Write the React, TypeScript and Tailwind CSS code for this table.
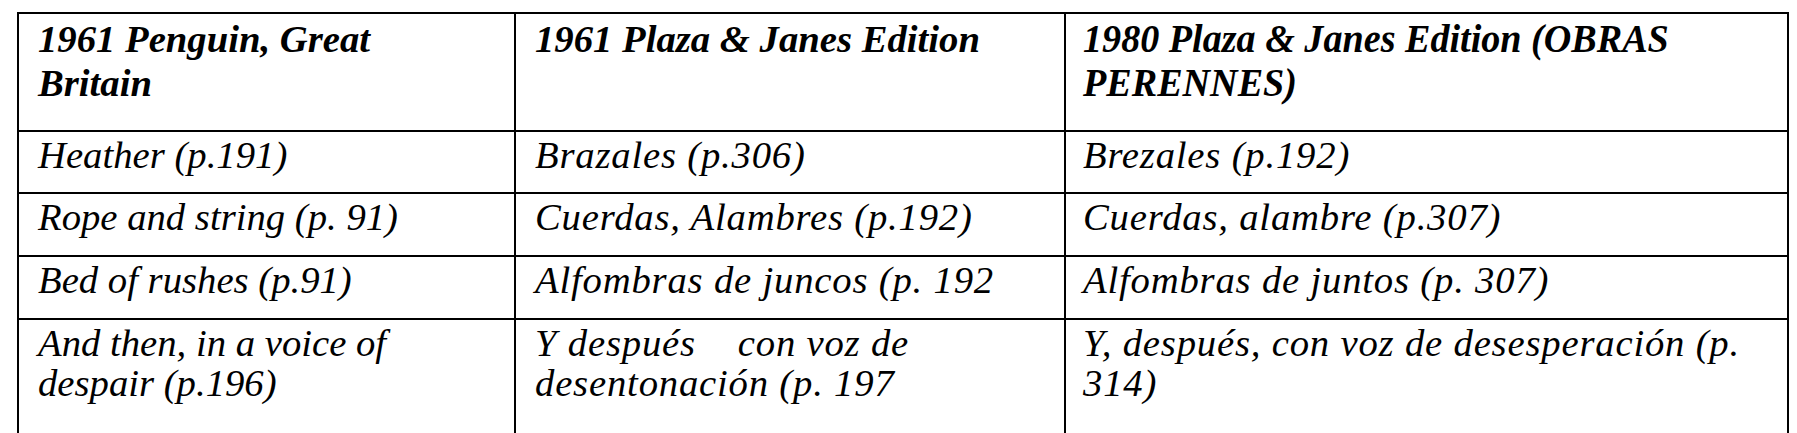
import type { FC, ReactNode } from 'react';

type Row = {
  cells: ReactNode[];
  height: string;
};

const serif = "font-['Liberation_Serif','Times_New_Roman',serif]";

const rows: Row[] = [
  {
    cells: ['Heather (p.191)', 'Brazales (p.306)', 'Brezales (p.192)'],
    height: 'h-[62px]',
  },
  {
    cells: [
      'Rope and string (p. 91)',
      'Cuerdas, Alambres (p.192)',
      'Cuerdas, alambre (p.307)',
    ],
    height: 'h-[63px]',
  },
  {
    cells: [
      'Bed of rushes (p.91)',
      'Alfombras de juncos (p. 192',
      'Alfombras de juntos (p. 307)',
    ],
    height: 'h-[63px]',
  },
  {
    cells: [
      <>
        And then, in a voice of
        <br />
        despair (p.196)
      </>,
      <>
        Y después{'\u00a0\u00a0\u00a0'} con voz de
        <br />
        desentonación (p. 197
      </>,
      <>
        Y, después, con voz de desesperación (p.
        <br />
        314)
      </>,
    ],
    height: 'h-[120px]',
  },
];

const colWidths = ['w-[497px]', 'w-[550px]', 'flex-1'];

const ComparisonTable: FC = () => {
  return (
    <div className={`w-[1772px] border-2 border-black ${serif} text-black`}>
      {/* header */}
      <div className="flex h-[118px] border-b-2 border-black">
        <div className={`${colWidths[0]} border-r-2 border-black pl-[19px] pt-[3px]`}>
          <p className="text-[38.7px] leading-[44px] font-bold italic">
            1961 Penguin, Great
            <br />
            Britain
          </p>
        </div>
        <div className={`${colWidths[1]} border-r-2 border-black pl-[19px] pt-[3px]`}>
          <p className="text-[38.7px] leading-[44px] font-bold italic">
            1961 Plaza &amp; Janes Edition
          </p>
        </div>
        <div className={`${colWidths[2]} pl-[17px] pt-[2px]`}>
          {/* this heading is set narrower and taller in the source */}
          <p className="origin-left scale-x-[0.93] whitespace-nowrap text-[41px] leading-[44px] font-bold italic">
            1980 Plaza &amp; Janes Edition (OBRAS
            <br />
            PERENNES)
          </p>
        </div>
      </div>

      {rows.map((row, i) => (
        <div
          key={i}
          className={`flex ${row.height} ${
            i < rows.length - 1 ? 'border-b-2 border-black' : ''
          }`}
        >
          {row.cells.map((cell, j) => (
            <div
              key={j}
              className={`${colWidths[j]} ${
                j < 2 ? 'border-r-2 border-black' : ''
              } ${j === 2 ? 'pl-[17px]' : 'pl-[19px]'} pt-[3px]`}
            >
              <p
                className={`text-[38.7px] leading-[40px] italic whitespace-nowrap ${
                  j > 0 ? 'tracking-[0.8px]' : ''
                }`}
              >
                {cell}
              </p>
            </div>
          ))}
        </div>
      ))}
    </div>
  );
};

export default function App() {
  return (
    <div className="h-[433px] overflow-hidden bg-white pl-[17px] pt-[12px]">
      <ComparisonTable />
    </div>
  );
}
